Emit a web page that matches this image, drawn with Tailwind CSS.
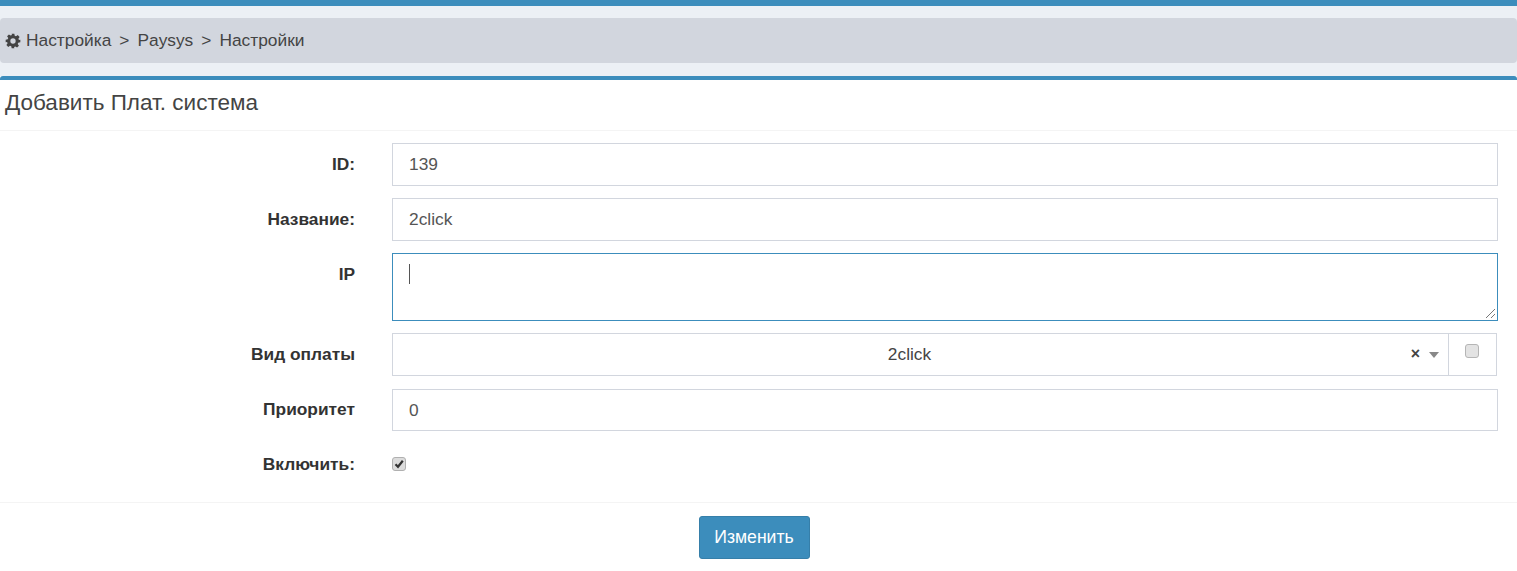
<!DOCTYPE html>
<html lang="en">
<head>
  <meta charset="UTF-8" />
  <title>Paysys</title>
  <script src="https://cdn.jsdelivr.net/npm/@tailwindcss/browser@4"></script>
</head>
<body class="bg-white font-['Liberation_Sans',Arial,sans-serif] text-[17.33px] text-[#333] overflow-hidden">
  <div class="h-[571px] w-[1517px] flex flex-col">
    <div class="h-[6px] bg-[#3c8dbc]"></div>

    <!-- breadcrumb -->
    <div class="bg-[#ecf0f5] h-[70px] pt-[12px]">
      <div class="h-[45px] bg-[#d2d6de] rounded-[4px] flex items-center pl-[5px] text-[#444]">
        <svg class="w-[16px] h-[16px] mr-[5px] text-[#444]" viewBox="0 0 24 24" fill="currentColor">
          <path fill-rule="evenodd" d="M10 1h4l.6 3.1 1.9.8 2.6-1.8 2.8 2.8-1.8 2.6.8 1.9L23 10v4l-3.1.6-.8 1.9 1.8 2.6-2.8 2.8-2.6-1.8-1.9.8L14 23h-4l-.6-3.1-1.9-.8-2.6 1.8-2.8-2.8 1.8-2.6-.8-1.9L1 14v-4l3.1-.6.8-1.9-1.8-2.6 2.8-2.8 2.6 1.8 1.9-.8L10 1zm2 7a4 4 0 1 0 0 8 4 4 0 0 0 0-8z"/>
        </svg>
        <span>Настройка</span><span class="mx-[8px]">&gt;</span><span>Paysys</span><span class="mx-[8px]">&gt;</span><span>Настройки</span>
      </div>
    </div>

    <!-- box -->
    <div class="flex-1 bg-white border-t-[4px] border-[#3c8dbc] rounded-t-[3px] flex flex-col">
      <div class="h-[51px] border-b border-[#f4f4f4] flex items-center pl-[5px] pb-[5px] text-[22.5px] text-[#444]">Добавить Плат. система</div>

      <div class="pt-[12px] pr-[19px] flex flex-col gap-[12px]">
        <div class="flex">
          <label class="w-[355px] shrink-0 text-right font-bold pt-[9px]">ID:</label>
          <input value="139" class="ml-[37px] flex-1 h-[43px] border border-[#d2d6de] px-[16px] text-[#555] outline-none" />
        </div>
        <div class="flex">
          <label class="w-[355px] shrink-0 text-right font-bold pt-[9px]">Название:</label>
          <input value="2click" class="ml-[37px] flex-1 h-[43px] border border-[#d2d6de] px-[16px] text-[#555] outline-none" />
        </div>
        <div class="flex">
          <label class="w-[355px] shrink-0 text-right font-bold pt-[9px]">IP</label>
          <div class="ml-[37px] flex-1 h-[68px] border border-[#3c8dbc] relative">
            <div class="absolute left-[16px] top-[10px] w-px h-[20px] bg-[#555]"></div>
            <svg class="absolute right-[1px] bottom-[1px] w-[11px] h-[11px] text-[#777]" viewBox="0 0 11 11" fill="none" stroke="currentColor" stroke-width="1">
              <path d="M1 10 10 1M6 10l4-4"/>
            </svg>
          </div>
        </div>
        <div class="flex">
          <label class="w-[355px] shrink-0 text-right font-bold pt-[9px]">Вид оплаты</label>
          <div class="ml-[37px] flex-1 flex h-[43px]">
            <div class="flex-1 border border-[#d2d6de] flex items-center relative text-[#444]">
              <span class="flex-1 text-center pr-[22px]">2click</span>
              <span class="absolute right-[28px] top-[13px] text-[16px] leading-[14px] font-bold">×</span>
              <span class="absolute right-[9px] top-[18px] w-0 h-0 border-x-[5px] border-x-transparent border-t-[6px] border-t-[#888]"></span>
            </div>
            <div class="w-[48px] border border-l-0 border-[#d2d6de] flex justify-center pt-[10px] pr-[1px]">
              <span class="w-[14px] h-[14px] rounded-[3px] bg-[#e3e3e3] border border-[#b5b5b5]"></span>
            </div>
          </div>
          <div class="w-px"></div>
        </div>
        <div class="flex mt-[1px]">
          <label class="w-[355px] shrink-0 text-right font-bold pt-[8px]">Приоритет</label>
          <input value="0" class="ml-[37px] flex-1 h-[42px] border border-[#d2d6de] px-[16px] text-[#555] outline-none" />
        </div>
        <div class="flex h-[61px] -mt-[2px]">
          <label class="w-[355px] shrink-0 text-right font-bold pt-[11px]">Включить:</label>
          <div class="ml-[37px] pt-[16px]">
            <span class="flex items-center justify-center w-[14px] h-[14px] rounded-[3px] bg-[#dcdcdc] border border-[#b0b0b0]">
              <svg class="w-[10px] h-[10px] text-[#333]" viewBox="0 0 10 10" fill="none" stroke="currentColor" stroke-width="2.2">
                <path d="M1.5 5.2 4 7.8 8.8 1.8"/>
              </svg>
            </span>
          </div>
        </div>
      </div>

      <div class="border-t border-[#f4f4f4] pt-[13px] flex justify-center pr-[9px]">
        <button class="w-[111px] h-[43px] bg-[#3c8dbc] border border-[#367fa9] rounded-[3px] text-white text-[17.6px]">Изменить</button>
      </div>
    </div>
  </div>
</body>
</html>
